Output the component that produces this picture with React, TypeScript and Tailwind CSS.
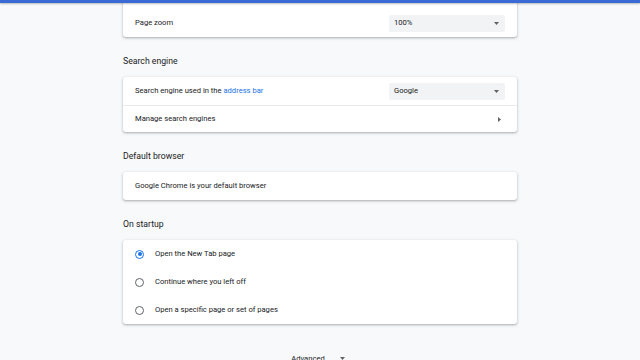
import React from 'react'

function SelectBox({ value }: { value: string }) {
  return (
    <div className="w-[116px] h-[17px] rounded-[2px] bg-[#f1f3f4] flex items-center justify-between pl-[5px] pr-[6px]">
      <span className="text-[7.6px] text-[#202124]">{value}</span>
      <svg width="5" height="3" viewBox="0 0 5 3" className="text-[#5f6368]">
        <path d="M0 0h5L2.5 3z" fill="currentColor" />
      </svg>
    </div>
  )
}

function Row({
  children,
  right,
  divider,
}: {
  children?: React.ReactNode
  right?: React.ReactNode
  divider?: boolean
}) {
  return (
    <div
      className={`flex items-center justify-between pl-[12px] pr-[12px] ${
        divider ? 'h-[27px] border-t border-[#e8eaed]' : 'h-[28px]'
      }`}
    >
      <div className="text-[7.6px] text-[#202124]">{children}</div>
      {right}
    </div>
  )
}

function Card({ children }: { children: React.ReactNode }) {
  return (
    <div className="bg-white rounded-[3px] shadow-[0_1px_2px_rgba(60,64,67,0.3),0_1px_3px_1px_rgba(60,64,67,0.1)]">
      {children}
    </div>
  )
}

function Heading({ children }: { children: React.ReactNode }) {
  return (
    <div className="h-[40px] pt-[9px] flex items-center text-[8.7px] text-[#202124]">
      {children}
    </div>
  )
}

function Radio({ checked, label }: { checked?: boolean; label: string }) {
  return (
    <div className="h-[28px] flex items-center pl-[12px]">
      <span
        className={`w-[9px] h-[9px] rounded-full border-[1.5px] flex items-center justify-center ${
          checked ? 'border-[#1a73e8]' : 'border-[#5f6368]'
        }`}
      >
        {checked && <span className="w-[4px] h-[4px] rounded-full bg-[#1a73e8]" />}
      </span>
      <span className="ml-[11px] text-[7.6px] text-[#202124]">{label}</span>
    </div>
  )
}

const arrowRight = (
  <svg width="3" height="5" viewBox="0 0 3 5" className="text-[#5f6368] mr-[4px]">
    <path d="M0 0l3 2.5L0 5z" fill="currentColor" />
  </svg>
)

export default function App() {
  return (
    <div
      className="relative w-[640px] h-[360px] overflow-hidden bg-[#f8f9fa]"
      style={{ fontFamily: 'Roboto, "Noto Sans", sans-serif' }}
    >
      <div className="absolute top-0 left-0 right-0 h-[3px] bg-[#3a6ad6] shadow-[0_1px_2px_rgba(60,64,67,0.35)] z-10" />

      <div className="w-[394px] mx-auto -mt-[19px]">
        <Card>
          <Row />
          <Row right={<SelectBox value="100%" />}>Page zoom</Row>
        </Card>

        <Heading>Search engine</Heading>
        <Card>
          <Row right={<SelectBox value="Google" />}>
            Search engine used in the <span className="text-[#1a73e8]">address bar</span>
          </Row>
          <Row divider right={arrowRight}>
            Manage search engines
          </Row>
        </Card>

        <Heading>Default browser</Heading>
        <Card>
          <Row>Google Chrome is your default browser</Row>
        </Card>

        <Heading>On startup</Heading>
        <Card>
          <Radio checked label="Open the New Tab page" />
          <Radio label="Continue where you left off" />
          <Radio label="Open a specific page or set of pages" />
        </Card>

        <div className="mt-[29px] flex items-center justify-center pr-[4px] gap-[15px] text-[7.6px] text-[#202124]">
          <span>Advanced</span>
          <svg width="5" height="3" viewBox="0 0 5 3" className="text-[#5f6368]">
            <path d="M0 0h5L2.5 3z" fill="currentColor" />
          </svg>
        </div>
      </div>
    </div>
  )
}
